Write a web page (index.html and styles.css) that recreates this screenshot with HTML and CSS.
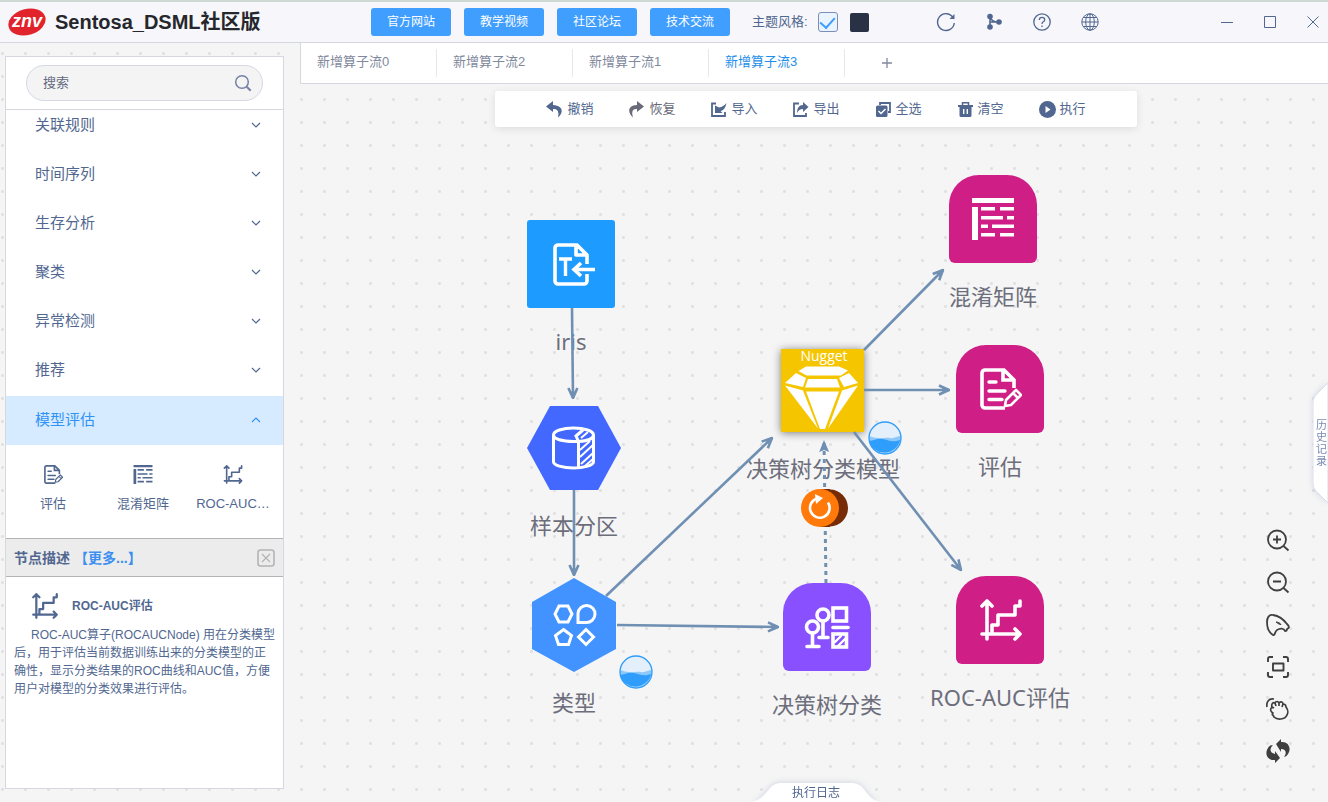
FILE: index.html
```html
<!DOCTYPE html>
<html lang="zh-CN">
<head>
<meta charset="utf-8">
<title>Sentosa_DSML社区版</title>
<link rel="stylesheet" href="styles.css">
</head>
<body>
<svg class="defs" aria-hidden="true">
  <defs>
    <symbol id="i-doc" viewBox="0 0 42 42">
      <path d="M25 40H5a3 3 0 0 1-3-3V5a3 3 0 0 1 3-3h19l10 10v8M23 2v10h11" fill="none" stroke="currentColor" stroke-width="3.6"/>
      <path d="M9 14h7M9 23h16M9 31.500h13" fill="none" stroke="currentColor" stroke-width="3.4" stroke-linecap="round"/>
      <path d="M25 38l1-6 10-10 5 5-10 10zM33 25l5 5" fill="none" stroke="currentColor" stroke-width="2.6" stroke-linejoin="round"/>
    </symbol>
    <symbol id="i-matrix" viewBox="0 0 42 42">
      <path d="M0 0h42v5H0zM0 9h6v33H0zM9 9h14v3.500H9zM28 9h14v3.500H28zM9 18h22v3.500H9zM35 18h7v3.500h-7zM9 26.500h7v3.500H9zM20 26.500h22v3.500H20zM9 35h14v3.500H9zM28 35h14v3.500H28z" fill="currentColor"/>
    </symbol>
    <symbol id="i-roc" viewBox="0 0 42 42">
      <path d="M7 40V2M2 7l5-5 5 5M2 35h38M35 30l5 5-5 5M12 34v-8h6V16h17V7h5V2" fill="none" stroke="currentColor" stroke-width="3.600" stroke-linecap="round" stroke-linejoin="round"/>
    </symbol>
    <symbol id="i-down" viewBox="0 0 12 12"><path d="M2 4l4 4 4-4" fill="none" stroke="currentColor" stroke-width="1.200"/></symbol>
    <symbol id="i-wave" viewBox="0 0 34 34">
      <circle cx="17" cy="17" r="16" fill="#e3effa"/>
      <path d="M1 15c4 1 6 2 9 2 5 1 8-1 12 0 4 1 7-2 11-2a16 16 0 0 1-32 2z" fill="#8cc8fa"/>
      <path d="M1 20c5 0 8-3 14-2 6 1 9 4 17 1a16 16 0 0 1-31 1z" fill="#2f9dfb"/>
      <circle cx="17" cy="17" r="16" fill="none" stroke="#2f9dfb" stroke-width="1.300"/>
    </symbol>
    <marker id="arrow" viewBox="0 0 12 12" refX="11" refY="6" markerWidth="12" markerHeight="12" markerUnits="userSpaceOnUse" orient="auto">
      <path d="M1 1.500l10 4.500-10 4.500M4 6h7" fill="none" stroke="#7090b3" stroke-width="2.600"/>
    </marker>
    <marker id="arrow-solid" viewBox="0 0 12 12" refX="11" refY="6" markerWidth="12" markerHeight="12" markerUnits="userSpaceOnUse" orient="auto">
      <path d="M0 1l12 5-12 5 2-5z" fill="#7090b3"/>
    </marker>
  </defs>
</svg>

<header class="topbar">
  <div class="brand">
    <svg class="logo" viewBox="0 0 38 30" aria-hidden="true">
      <ellipse cx="19" cy="15" rx="19" ry="13" fill="#e1242c" transform="rotate(-16 19 15)"/>
      <text x="19" y="20" class="logo-text" text-anchor="middle">znv</text>
    </svg>
    <h1 class="title">Sentosa_DSML社区版</h1>
  </div>
  <nav class="links">
    <button class="link-btn" type="button">官方网站</button>
    <button class="link-btn" type="button">教学视频</button>
    <button class="link-btn" type="button">社区论坛</button>
    <button class="link-btn" type="button">技术交流</button>
  </nav>
  <div class="theme">
    <label for="theme-light">主题风格:</label>
    <input class="theme-check" id="theme-light" type="checkbox" checked>
    <button class="theme-dark" type="button" aria-label="深色主题"></button>
  </div>
  <div class="tools">
    <button class="icon-btn" type="button" aria-label="刷新"><svg viewBox="0 0 20 20" width="20" height="20"><path d="M17 5.500A8.400 8.400 0 1 0 18.300 11" fill="none" stroke="currentColor" stroke-width="1.400"/><path d="M18.500 2v5h-5z" fill="currentColor"/></svg></button>
    <button class="icon-btn" type="button" aria-label="流程"><svg viewBox="0 0 20 20" width="20" height="20"><path d="M6 4v12M6 10h8M6 5q2 5 8 5" fill="none" stroke="currentColor" stroke-width="1.600"/><circle cx="6" cy="4.500" r="2.800" fill="currentColor"/><circle cx="6" cy="15" r="2.800" fill="currentColor"/><circle cx="15" cy="10" r="2.800" fill="currentColor"/></svg></button>
    <button class="icon-btn" type="button" aria-label="帮助"><svg viewBox="0 0 20 20" width="20" height="20" fill="none" stroke="currentColor" stroke-width="1.300"><circle cx="10" cy="10" r="8.200"/><path d="M7.300 8q0-2.700 2.700-2.700t2.700 2.400q0 1.600-1.700 2.300-1 .500-1 2"/><path d="M10 13.500v1.500"/></svg></button>
    <button class="icon-btn" type="button" aria-label="语言"><svg viewBox="0 0 20 20" width="20" height="20" fill="none" stroke="currentColor" stroke-width="1"><circle cx="10" cy="10" r="8.200"/><ellipse cx="10" cy="10" rx="4.300" ry="8.200"/><path d="M10 2v16M2 10h16M3.500 5.500h13M3.500 14.500h13"/></svg></button>
  </div>
  <div class="window-ctl">
    <button class="icon-btn" type="button" aria-label="最小化"><svg viewBox="0 0 14 14" width="14" height="14"><path d="M1 7.500h12" stroke="currentColor"/></svg></button>
    <button class="icon-btn" type="button" aria-label="最大化"><svg viewBox="0 0 14 14" width="14" height="14"><path d="M1.500 1.500h11v11h-11z" fill="none" stroke="currentColor"/></svg></button>
    <button class="icon-btn" type="button" aria-label="关闭"><svg viewBox="0 0 14 14" width="14" height="14"><path d="M1.500 1.500l11 11M12.500 1.500l-11 11" stroke="currentColor"/></svg></button>
  </div>
</header>

<div class="workspace">
  <aside class="sidebar">
    <form class="search">
      <label class="search-box">
        <input class="search-input" type="text" placeholder="搜索" aria-label="搜索">
        <svg viewBox="0 0 18 18" width="18" height="18" fill="none" stroke="#7681a8"><circle cx="8" cy="8" r="6.300" stroke-width="1.500"/><path d="M12.700 12.700l4 4" stroke-width="2"/></svg>
      </label>
    </form>
    <div class="list-clip">
      <div class="list">
        <button class="group" type="button">关联规则<svg width="12" height="12"><use href="#i-down"/></svg></button>
        <button class="group" type="button">时间序列<svg width="12" height="12"><use href="#i-down"/></svg></button>
        <button class="group" type="button">生存分析<svg width="12" height="12"><use href="#i-down"/></svg></button>
        <button class="group" type="button">聚类<svg width="12" height="12"><use href="#i-down"/></svg></button>
        <button class="group" type="button">异常检测<svg width="12" height="12"><use href="#i-down"/></svg></button>
        <button class="group" type="button">推荐<svg width="12" height="12"><use href="#i-down"/></svg></button>
        <button class="group group-open" type="button">模型评估<svg width="12" height="12"><use href="#i-down"/></svg></button>
        <div class="ops">
          <button class="op" type="button"><svg width="19" height="19"><use href="#i-doc"/></svg>评估</button>
          <button class="op" type="button"><svg width="20" height="19"><use href="#i-matrix"/></svg>混淆矩阵</button>
          <button class="op" type="button"><svg width="20" height="19"><use href="#i-roc"/></svg>ROC-AUC…</button>
        </div>
      </div>
    </div>
    <section class="desc">
      <div class="desc-head">
        <h2 class="desc-title">节点描述</h2>
        <a class="more" href="#">【更多...】</a>
        <button class="desc-close" type="button" aria-label="关闭描述"><svg viewBox="0 0 18 18" width="18" height="18" fill="none" stroke="#b3b3b3"><rect x="1" y="1" width="16" height="16" rx="2.500" stroke-width="1.600"/><path d="M5 5l8 8M13 5l-8 8" stroke-width="1.200"/></svg></button>
      </div>
      <div class="desc-body">
        <h3 class="desc-name"><svg width="26" height="26"><use href="#i-roc"/></svg>ROC-AUC评估</h3>
        <p class="desc-text">ROC-AUC算子(ROCAUCNode) 用在分类模型<br>后，用于评估当前数据训练出来的分类模型的正<br>确性，显示分类结果的ROC曲线和AUC值，方便<br>用户对模型的分类效果进行评估。</p>
      </div>
    </section>
  </aside>

  <main class="main">
    <nav class="tabs">
      <button class="tab" type="button">新增算子流0</button>
      <button class="tab" type="button">新增算子流2</button>
      <button class="tab" type="button">新增算子流1</button>
      <button class="tab tab-on" type="button">新增算子流3</button>
      <button class="tab-add" type="button" aria-label="新增"><svg viewBox="0 0 12 12" width="12" height="12"><path d="M1 6h10M6 1v10" stroke="currentColor" stroke-width="1.300"/></svg></button>
    </nav>
    <div class="canvas">
      <div class="toolbar">
        <button class="act" type="button"><svg viewBox="0 0 17 17" width="17" height="17"><path d="M7 0L0 5.500 7 11V8c4-.500 6.500 2 5 8.500 6-5 5-12-5-12.500z" fill="currentColor"/></svg>撤销</button>
        <button class="act act-dim" type="button"><svg viewBox="0 0 17 17" width="17" height="17"><path d="M9 0l7 5.500L9 11V8C5 7.500 3 10 5 16.500-1 11 0 4.500 9 4z" fill="currentColor"/></svg>恢复</button>
        <button class="act" type="button"><svg viewBox="0 0 17 17" width="17" height="17"><path d="M6 2.500H2v12.500h13V11" fill="none" stroke="currentColor" stroke-width="1.800"/><path d="M5 4.500v7.500h7.500L10.500 10c3-.500 5-3 6-8-2 2.500-4.500 4-7.500 4.500z" fill="currentColor"/></svg>导入</button>
        <button class="act" type="button"><svg viewBox="0 0 17 17" width="17" height="17"><path d="M7 2.500H2v12.500h12V12" fill="none" stroke="currentColor" stroke-width="1.800"/><path d="M11 1l5.500 5-5.500 5V8C8 8 6.500 9.500 5 12c0-5 2-8 6-8z" fill="currentColor"/></svg>导出</button>
        <button class="act" type="button"><svg viewBox="0 0 17 17" width="17" height="17"><path d="M5 4V2h10v9h-2" fill="none" stroke="currentColor" stroke-width="1.800"/><rect x="1" y="4.500" width="11.500" height="11.500" rx="1.500" fill="currentColor"/><path d="M3.500 10l2.500 2.500 4.500-4.500" fill="none" stroke="#fff" stroke-width="1.500"/></svg>全选</button>
        <button class="act" type="button"><svg viewBox="0 0 17 17" width="17" height="17"><path d="M5.500 4V1.800h6V4" fill="none" stroke="currentColor" stroke-width="1.500"/><path d="M1 4h15v2H1zM2.500 6h12v8.500a1.500 1.500 0 0 1-1.500 1.500H4a1.500 1.500 0 0 1-1.500-1.500z" fill="currentColor"/><path d="M6.700 8v5M10.300 8v5" stroke="#fff" stroke-width="1.400"/></svg>清空</button>
        <button class="act" type="button"><svg viewBox="0 0 17 17" width="17" height="17"><circle cx="8.500" cy="8.500" r="8.500" fill="currentColor"/><path d="M6.500 5v7l5-3.500z" fill="#fff"/></svg>执行</button>
      </div>

      <div class="node n-iris">
        <svg class="shape" viewBox="0 0 88 88"><rect width="88" height="88" rx="3" fill="#1e9bff"/><g transform="translate(26 23)" fill="none" stroke="#fff" stroke-width="3.600"><path d="M34 31v7a3 3 0 0 1-3 3H5a3 3 0 0 1-3-3V5a3 3 0 0 1 3-3h19l10 10v9M23 2v10h11" stroke-linejoin="round"/><path d="M6 16h13M12.500 16v17" stroke-width="3.400"/><path d="M42 26.500H21M28 20l-7 6.500 7 6.500"/></g></svg>
        <span class="label">iris</span>
      </div>
      <div class="node n-sample">
        <svg class="shape" viewBox="0 0 88 88"><path d="M-3 44L20 2h48l23 42-23 42H20z" fill="#4268ff"/><g transform="translate(22 23)" fill="none" stroke="#fff" stroke-width="3"><path d="M1.500 8v27c0 3 9 6 20 6s20-3 20-6V8c0-4-9-7-20-7S1.500 4 1.500 8c0 4 9 6.500 20 6.500h5V40M26.500 14.500c9-.500 15-3 15-6.500M26.500 14.500L24 9l7-6"/><path d="M29 11l7-6M28 23l10-9M28 30l13-12M29 37l12-11M33 39l8-7" stroke-width="2"/></g></svg>
        <span class="label">样本分区</span>
      </div>
      <div class="node n-type">
        <svg class="shape" viewBox="0 0 88 88"><path d="M44-3l42 24v47L44 91 2 68V21z" fill="#4293ff"/><g transform="translate(23 23)" fill="none" stroke="#fff" stroke-width="3"><path d="M6 2h9l4 8-4 8H6l-4-8z"/><path d="M25 18.500v-9A8.500 8.500 0 1 1 33 18.500z"/><path d="M10.500 25.500l8 6-3 9h-10l-3-9z"/><path d="M33 25.500l7.500 7.500-7.500 7.500-7.500-7.500z"/></g></svg>
        <span class="label">类型</span>
        <svg class="wave" width="34" height="34"><use href="#i-wave"/></svg>
      </div>
      <div class="node n-nugget">
        <svg class="shape" viewBox="0 0 88 88"><rect class="gold" x="2" y="2" width="83" height="83" fill="#f5c500"/><text class="nugget-text" x="45" y="14" text-anchor="middle">Nugget</text><g fill="#fff"><path d="M27 19.500h33l9 4-7 5H27.500l-8-4.500z"/><path d="M17 26l10 5-3 9-18-4z"/><path d="M70 26l-10 5 5 9 14-4z"/><path d="M29 32h29l3 8.500H26z"/><path d="M6 38.500l18 5 15 38z"/><path d="M79 38.500l-16 5-14 38z"/><path d="M27 44.500h33L46 82h-5z"/></g></svg>
        <span class="label">决策树分类模型</span>
        <svg class="wave" width="34" height="34"><use href="#i-wave"/></svg>
      </div>
      <div class="node n-tree">
        <svg class="shape" viewBox="0 0 88 88"><path d="M0 30A30 30 0 0 1 30 0h28a30 30 0 0 1 30 30v52a6 6 0 0 1-6 6H6a6 6 0 0 1-6-6z" fill="#8950ff"/><g transform="translate(22 23)" fill="none" stroke="#fff" stroke-width="3.600" stroke-linecap="round"><circle cx="7.500" cy="21" r="6"/><path d="M7.500 27v13M2 40.500h12"/><circle cx="18" cy="9" r="6"/><path d="M18 15v16M14 31.500h9"/><rect x="28" y="2" width="13.500" height="13"/><path d="M28 21.500h15"/><rect x="28" y="28" width="13.500" height="13"/><path d="M30 36l6-6M33 40l7-7" stroke-width="2.400"/></g></svg>
        <span class="label">决策树分类</span>
      </div>
      <div class="node n-matrix">
        <svg class="shape" viewBox="0 0 88 88"><path d="M0 30A30 30 0 0 1 30 0h28a30 30 0 0 1 30 30v52a6 6 0 0 1-6 6H6a6 6 0 0 1-6-6z" fill="#cf1e86"/><use class="glyph" href="#i-matrix" x="23" y="23" width="42" height="42"/></svg>
        <span class="label">混淆矩阵</span>
      </div>
      <div class="node n-eval">
        <svg class="shape" viewBox="0 0 88 88"><path d="M0 30A30 30 0 0 1 30 0h28a30 30 0 0 1 30 30v52a6 6 0 0 1-6 6H6a6 6 0 0 1-6-6z" fill="#cf1e86"/><use class="glyph" href="#i-doc" x="24" y="23" width="42" height="42"/></svg>
        <span class="label">评估</span>
      </div>
      <div class="node n-roc">
        <svg class="shape" viewBox="0 0 88 88"><path d="M0 30A30 30 0 0 1 30 0h28a30 30 0 0 1 30 30v52a6 6 0 0 1-6 6H6a6 6 0 0 1-6-6z" fill="#cf1e86"/><use class="glyph" href="#i-roc" x="24" y="23" width="42" height="42"/></svg>
        <span class="label">ROC-AUC评估</span>
      </div>

      <svg class="edges" aria-hidden="true">
        <g fill="none" stroke="#7090b3" stroke-width="2.600">
          <path d="M272 224l1 90" marker-end="url(#arrow)"/>
          <path d="M274 406v85" marker-end="url(#arrow)"/>
          <path d="M306 512l166-158" marker-end="url(#arrow)"/>
          <path d="M317 541l161 2" marker-end="url(#arrow)"/>
          <path d="M564 266l79-80" marker-end="url(#arrow)"/>
          <path d="M564 306h85" marker-end="url(#arrow)"/>
          <path d="M554 348l107 138" marker-end="url(#arrow)"/>
          <path d="M526 499l-2-142" stroke-dasharray="4 4" stroke-width="3" marker-end="url(#arrow-solid)"/>
        </g>
        <g>
          <ellipse cx="530" cy="424" rx="18" ry="18.500" fill="#762c06"/>
          <rect x="521" y="405" width="9" height="38" fill="#762c06"/>
          <circle cx="520" cy="424" r="19" fill="#ff7a0a"/>
          <path d="M517 414.500a9.800 9.800 0 1 0 11 4" fill="none" stroke="#fff" stroke-width="2.600"/>
          <path d="M515 410l8 4-7 6z" fill="#fff"/>
        </g>
      </svg>

      <div class="view-tools">
        <button class="view-btn" type="button" aria-label="放大"><svg viewBox="0 0 24 24" width="24" height="24" fill="none" stroke="currentColor" stroke-width="1.800"><circle cx="11" cy="10.500" r="9"/><path d="M17.500 17l5 4.500M7 10.500h8M11 6.500v8"/></svg></button>
        <button class="view-btn" type="button" aria-label="缩小"><svg viewBox="0 0 24 24" width="24" height="24" fill="none" stroke="currentColor" stroke-width="1.800"><circle cx="11" cy="10.500" r="9"/><path d="M17.500 17l5 4.500M7 10.500h8"/></svg></button>
        <button class="view-btn" type="button" aria-label="选择"><svg viewBox="0 0 24 24" width="24" height="24" fill="none" stroke="currentColor" stroke-width="1.800" stroke-linejoin="round"><path d="M7 22C2 19 1 14 1 9c0-4 2-8 6-7 6 1 11 5 14 9 2 2 3 4 0 5 0 1-1 2-2 2-1-3-5-3-8-1-2 1-2 6-4 5z"/><path d="M10 9c2 0 4 1 5 2.500-2 0-3-1-5-2.500z" fill="currentColor" stroke-width="1"/></svg></button>
        <button class="view-btn" type="button" aria-label="适应画布"><svg viewBox="0 0 24 24" width="24" height="24" fill="none" stroke="currentColor" stroke-width="1.900" stroke-linejoin="round"><path d="M2 7V4q0-2 2-2h3M17 2h3q2 0 2 2v3M22 17v3q0 2-2 2h-3M7 22H4q-2 0-2-2v-3M7 8.500h10.500v7H7z"/></svg></button>
        <button class="view-btn" type="button" aria-label="拖动"><svg viewBox="0 0 24 24" width="24" height="24" fill="none" stroke="currentColor" stroke-width="1.700" stroke-linejoin="round"><path d="M1 10C0 5 3 1 8 2"/><path d="M7 16c-3-2-3-4-1-6-1-3 1-5 3-4 1-2 3-2 4 0 2-2 4-1 4 1 2 0 3 1 3 3 3 4 2 6 1 8-2 5-10 5-13 2l-1-2c-1 0-1-1 0-2zM9 6l1 3M13 6v3M17 7l-1 3M6 10l2 1"/></svg></button>
        <button class="view-btn" type="button" aria-label="重置"><svg viewBox="0 0 24 24" width="24" height="24" fill="currentColor"><path d="M10 5l5-5v3c7-1 11 6 7 12-1 2-3 3-4 3 3-4 2-8-3-8v3z"/><path d="M14 19l-5 5v-3C2 22-2 15 2 9c1-2 3-3 5-3-4 4-3 8 2 9v-3z"/></svg></button>
      </div>
      <button class="history" type="button"><svg viewBox="0 0 15 120" width="15" height="120" aria-hidden="true"><path d="M15 0L3 12q-3 3-3 7v82q0 4 3 7l12 12z" fill="#fff" stroke="#dcdfeb"/></svg><span class="history-text">历史记录</span></button>
      <button class="log" type="button"><svg viewBox="0 0 128 20" width="128" height="20" aria-hidden="true"><path d="M0 20c10-2 14-10 20-16q4-3 8-3h72q5 0 9 3c6 6 9 14 19 16z" fill="#fff"/></svg><span class="log-text">执行日志</span></button>
    </div>
  </main>
</div>
</body>
</html>
```

FILE: styles.css
```css
* {
  box-sizing: border-box;
}

body {
  margin: 0;
  height: 100vh;
  display: flex;
  flex-direction: column;
  overflow: hidden;
  color: #516790;
  background: #f5f5f5 radial-gradient(circle, #e0e0e0 1px, transparent 2px) -9px -4px / 23px 23px;
  font: 13px/20px "Liberation Sans", "Noto Sans CJK SC", sans-serif;
}

button {
  margin: 0;
  padding: 0;
  border: 0;
  background: none;
  color: inherit;
  font: inherit;
}

h1, h2, h3, p {
  margin: 0;
}

svg {
  display: block;
  flex: none;
}

.defs {
  position: absolute;
  width: 0;
  height: 0;
}

/* Top bar */
.topbar {
  display: flex;
  align-items: center;
  height: 43px;
  flex: none;
  padding: 0 8px;
  border-top: 2px solid #cfd9d3;
  border-bottom: 1px solid #d5d8e0;
  background: #f7f7fb;
}

.brand {
  display: flex;
  align-items: center;
  gap: 9px;
  width: 363px;
}

.logo {
  width: 38px;
  height: 30px;
}

.logo-text {
  fill: #fff;
  font: italic bold 18px "Liberation Sans", sans-serif;
}

.title {
  color: #26272c;
  font: bold 20px/28px "Liberation Sans", "Noto Sans CJK SC", sans-serif;
}

.links {
  display: flex;
  gap: 13px;
}

.link-btn {
  width: 80px;
  height: 28px;
  border-radius: 3px;
  background: #409eff;
  color: #fff;
  font-size: 12px;
}

.theme {
  display: flex;
  align-items: center;
  margin-left: 22px;
}

.theme-check {
  appearance: none;
  width: 20px;
  height: 20px;
  margin: 0 12px 0 10px;
  border: 1px solid #7b8db8;
  border-radius: 3px;
  background: #eaf4ff;
}

.theme-check:checked::before {
  content: "";
  display: block;
  width: 7px;
  height: 12px;
  margin: 1px auto;
  border: solid #409eff;
  border-width: 0 2px 2px 0;
  transform: rotate(42deg);
}

.theme-dark {
  width: 19px;
  height: 19px;
  border-radius: 2px;
  background: #293145;
}

.tools {
  display: flex;
  gap: 28px;
  margin-left: 67px;
}

.window-ctl {
  display: flex;
  gap: 29px;
  margin-left: auto;
}

/* Workspace */
.workspace {
  flex: 1;
  display: flex;
  min-height: 0;
}

.sidebar {
  display: flex;
  flex-direction: column;
  width: 279px;
  margin: 13px 16px 13px 5px;
  border: 1px solid #d5d8e0;
  background: #fff;
  flex: none;
}

.search {
  padding: 8px 20px;
  border-bottom: 1px solid #d5d8e0;
}

.search-box {
  display: flex;
  align-items: center;
  height: 36px;
  padding: 0 10px 0 16px;
  border: 1px solid #d5d8e4;
  border-radius: 18px;
  background: #f4f4f5;
}

.search-input {
  flex: 1;
  min-width: 0;
  padding: 0;
  border: 0;
  outline: 0;
  background: none;
  color: #516790;
  font: inherit;
}

.search-input::placeholder {
  color: #666b80;
}

.list-clip {
  flex: 1;
  min-height: 0;
  overflow: hidden;
}

.list {
  margin-top: -8px;
}

.group {
  display: flex;
  align-items: center;
  justify-content: space-between;
  width: 100%;
  height: 49px;
  padding: 0 21px 4px 29px;
  font-size: 15px;
}

.group-open {
  padding-bottom: 2px;
  background: #d6ebff;
  color: #2f92f6;
}

.group-open svg {
  transform: rotate(180deg);
}

.ops {
  display: grid;
  grid-template-columns: repeat(3, 90px);
  padding: 20px 2px;
}

.op {
  display: flex;
  flex-direction: column;
  align-items: center;
  gap: 10px;
}

.desc {
  height: 250px;
  border-top: 1px solid #b3b3b3;
}

.desc-head {
  display: flex;
  align-items: center;
  height: 38px;
  padding: 0 8px;
  border-bottom: 1px solid #b3b3b3;
  background: #ececec;
}

.desc-title,
.more {
  font-size: 14px;
  font-weight: bold;
}

.more {
  margin-left: 4px;
  color: #3b8ff0;
  text-decoration: none;
}

.desc-close {
  margin-left: auto;
}

.desc-body {
  padding: 16px 8px;
}

.desc-name {
  display: flex;
  align-items: center;
  gap: 14px;
  padding-left: 18px;
  font-size: 12px;
  font-weight: bold;
}

.desc-text {
  margin-top: 7px;
  font-size: 12px;
  line-height: 18px;
  text-indent: 17px;
  white-space: nowrap;
}

/* Tabs */
.main {
  flex: 1;
  min-width: 0;
  display: flex;
  flex-direction: column;
}

.tabs {
  display: flex;
  align-items: center;
  height: 41px;
  flex: none;
  border-left: 1px solid #d5d8e0;
  border-bottom: 1px solid #d5d8e0;
  background: #fff;
}

.tab {
  width: 136px;
  height: 28px;
  padding: 0 16px 2px;
  border-right: 1px solid #e7e8ee;
  color: #80889c;
  text-align: left;
}

.tab-on {
  color: #1e8ee8;
}

.tab-add {
  margin-left: 36px;
  color: #80889c;
}

/* Canvas */
.canvas {
  flex: 1;
  position: relative;
  padding: 7px 0 0 4px;
  overflow: hidden;
}

.toolbar {
  display: flex;
  align-items: center;
  gap: 35px;
  width: fit-content;
  height: 36px;
  margin: 0 auto;
  padding: 0 51px;
  border-radius: 3px;
  background: #fff;
  box-shadow: 0 2px 8px rgba(0, 0, 0, 0.1);
}

.act {
  display: flex;
  align-items: center;
  gap: 4px;
}

.act-dim {
  color: #686a78;
}

.edges {
  position: absolute;
  inset: 0;
  width: 100%;
  height: 100%;
  pointer-events: none;
}

.node {
  position: absolute;
  display: flex;
  flex-direction: column;
  align-items: center;
  gap: 18px;
  width: 88px;
}

.n-iris { left: 227px; top: 136px; }
.n-sample { left: 230px; top: 320px; }
.n-type { left: 230px; top: 497px; }
.n-nugget { left: 479px; top: 263px; }
.n-tree { left: 483px; top: 499px; }
.n-matrix { left: 649px; top: 91px; }
.n-eval { left: 656px; top: 261px; }
.n-roc { left: 656px; top: 492px; }

.shape {
  width: 88px;
  height: 88px;
  overflow: visible;
}

.glyph {
  color: #fff;
}

.gold {
  filter: drop-shadow(0 1px 4px rgba(0, 0, 0, 0.5));
}

.nugget-text {
  fill: #fff;
  font: 14px "Open Sans", sans-serif;
}

.label {
  color: #6d6e7c;
  font: 22px/30px "Noto Sans", "Noto Sans CJK SC", sans-serif;
  white-space: nowrap;
}

.wave {
  position: absolute;
  left: 89px;
  top: 74px;
}

.view-tools {
  position: absolute;
  right: 38px;
  bottom: 30px;
  display: grid;
  grid-auto-rows: 42px;
  align-items: center;
  color: #3f3f3f;
}

.history {
  position: absolute;
  right: 0;
  top: 299px;
  width: 15px;
  height: 120px;
  filter: drop-shadow(0 0 3px rgba(80, 100, 160, 0.2));
}

.history-text {
  position: absolute;
  left: 3px;
  top: 36px;
  width: 11px;
  color: #7d8bb3;
  font-size: 11px;
  line-height: 12px;
}

.log {
  position: absolute;
  left: 50%;
  bottom: 0;
  width: 128px;
  margin-left: -62px;
  filter: drop-shadow(0 0 3px rgba(80, 100, 160, 0.25));
}

.log-text {
  position: absolute;
  inset: 0;
  font-size: 12px;
  line-height: 22px;
}
```
